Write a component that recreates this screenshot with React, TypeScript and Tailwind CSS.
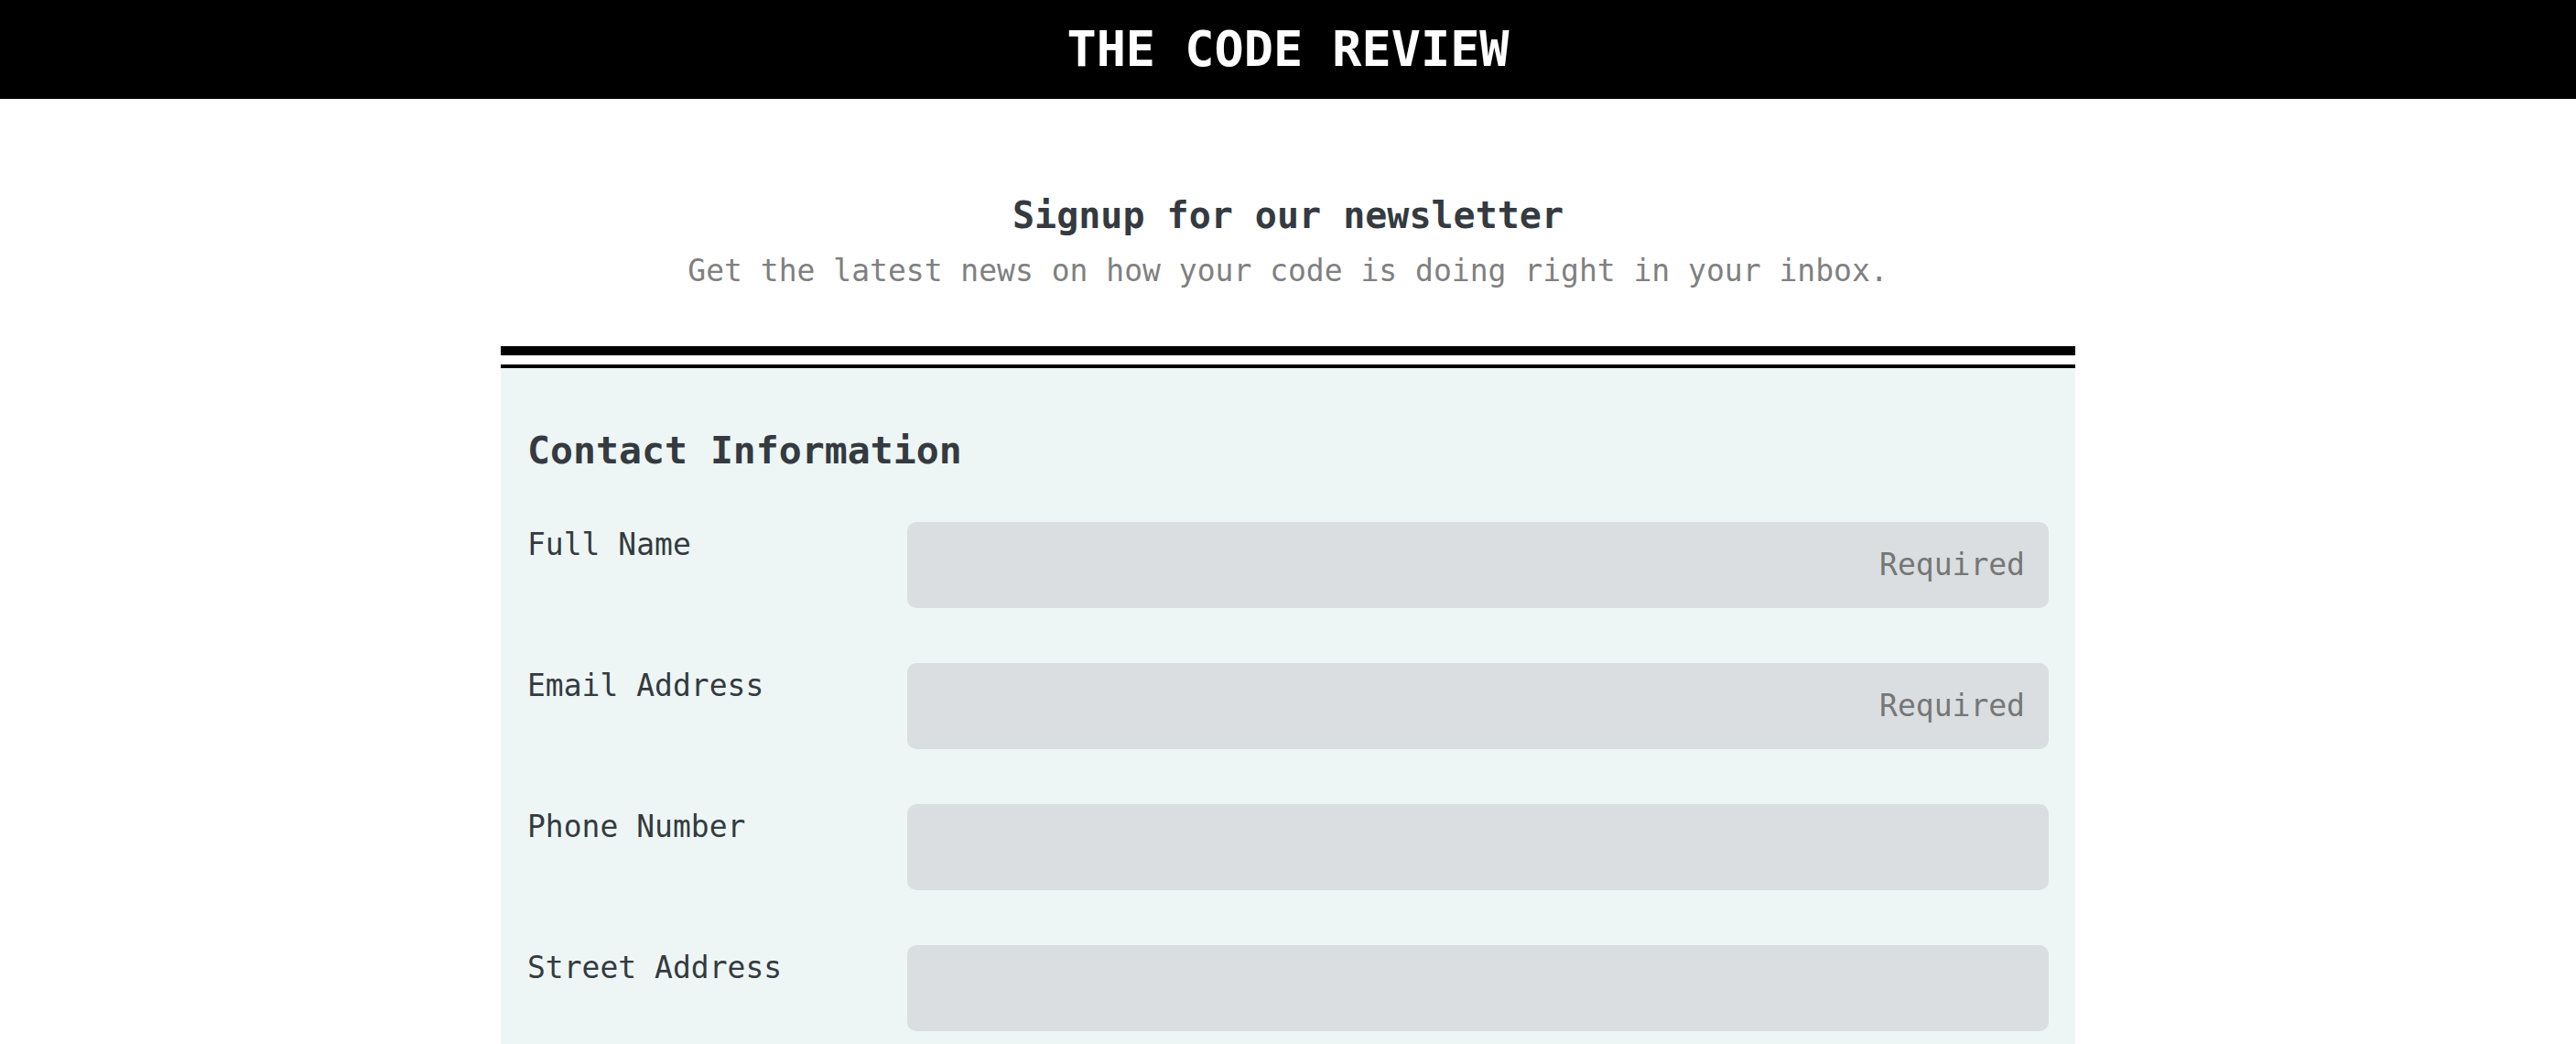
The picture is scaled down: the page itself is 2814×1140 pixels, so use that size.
const fields = [
  { label: 'Full Name', required: true },
  { label: 'Email Address', required: true },
  { label: 'Phone Number', required: false },
  { label: 'Street Address', required: false },
]

export default function App() {
  return (
    <div className="min-h-screen bg-white font-['DejaVu_Sans_Mono','Liberation_Mono',monospace]">
      <header className="h-[108px] bg-black flex items-center justify-center">
        <h1 className="text-[53.5px] leading-none font-bold text-white">THE CODE REVIEW</h1>
      </header>

      <main className="w-[1720px] mx-auto">
        <div className="pt-[107px] text-center">
          <h2 className="text-[40px] leading-none font-bold text-[#343a40]">Signup for our newsletter</h2>
          <p className="mt-[24px] text-[33px] leading-none text-[#808080]">
            Get the latest news on how your code is doing right in your inbox.
          </p>
        </div>

        {/* double rule above the form */}
        <div className="mt-[66px]">
          <div className="h-[10px] bg-black"></div>
          <div className="mt-[10px] h-[4px] bg-black"></div>
        </div>

        <form className="bg-[#edf6f5] px-[29px] pt-[69px] pb-16">
          <h3 className="text-[41.5px] leading-none font-bold text-[#343a40]">Contact Information</h3>

          <div className="mt-[57px] flex flex-col gap-[60px]">
            {fields.map((field) => (
              <div key={field.label} className="flex items-start">
                <label className="w-[415px] pt-2 text-[33px] leading-none text-[#343a40]">{field.label}</label>
                <input
                  type="text"
                  placeholder={field.required ? 'Required' : ''}
                  className="w-[1247px] h-[94px] rounded-[10px] bg-[#dadee0] px-[26px] text-right text-[33px] text-[#343a40] placeholder:text-[#767676] outline-none"
                />
              </div>
            ))}
          </div>
        </form>
      </main>
    </div>
  )
}
